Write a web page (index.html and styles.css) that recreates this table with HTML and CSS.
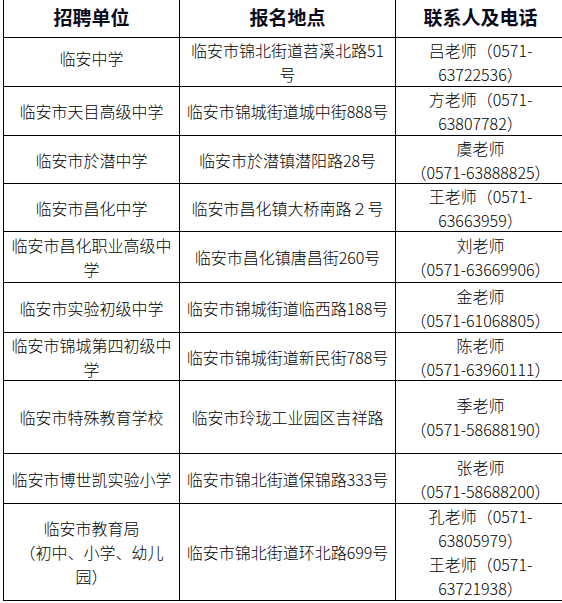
FILE: index.html
```
<!DOCTYPE html>
<html lang="zh-CN">
<head>
<meta charset="utf-8">
<title>招聘单位</title>
<link rel="stylesheet" href="styles.css">
</head>
<body>
<div class="table">
  <div class="cell head">招聘单位</div>
  <div class="cell head">报名地点</div>
  <div class="cell head">联系人及电话</div>

  <div class="cell raise">临安中学</div>
  <div class="cell">临安市锦北街道苕溪北路51<br>号</div>
  <div class="cell">吕老师（0571-<br>63722536）</div>

  <div class="cell">临安市天目高级中学</div>
  <div class="cell">临安市锦城街道城中街888号</div>
  <div class="cell">方老师（0571-<br>63807782）</div>

  <div class="cell">临安市於潜中学</div>
  <div class="cell">临安市於潜镇潜阳路28号</div>
  <div class="cell">虞老师<br>（0571-63888825）</div>

  <div class="cell">临安市昌化中学</div>
  <div class="cell">临安市昌化镇大桥南路２号</div>
  <div class="cell">王老师（0571-<br>63663959）</div>

  <div class="cell">临安市昌化职业高级中<br>学</div>
  <div class="cell">临安市昌化镇唐昌街260号</div>
  <div class="cell">刘老师<br>（0571-63669906）</div>

  <div class="cell">临安市实验初级中学</div>
  <div class="cell">临安市锦城街道临西路188号</div>
  <div class="cell">金老师<br>（0571-61068805）</div>

  <div class="cell">临安市锦城第四初级中<br>学</div>
  <div class="cell">临安市锦城街道新民街788号</div>
  <div class="cell">陈老师<br>（0571-63960111）</div>

  <div class="cell">临安市特殊教育学校</div>
  <div class="cell">临安市玲珑工业园区吉祥路</div>
  <div class="cell">季老师<br>（0571-58688190）</div>

  <div class="cell">临安市博世凯实验小学</div>
  <div class="cell">临安市锦北街道保锦路333号</div>
  <div class="cell">张老师<br>（0571-58688200）</div>

  <div class="cell">临安市教育局<br>（初中、小学、幼儿<br>园）</div>
  <div class="cell">临安市锦北街道环北路699号</div>
  <div class="cell">孔老师（0571-<br>63805979）<br>王老师（0571-<br>63721938）</div>
</div>
</body>
</html>
```
FILE: styles.css
```
html, body {
  margin: 0;
  padding: 0;
  background: #fff;
  overflow: hidden;
}

.table {
  display: grid;
  grid-template-columns: 175px 215px 169px;
  grid-template-rows: 38px 48px 48px 47px 47px 50px 49px 47px 72px 49px 96px;
  gap: 1px;
  padding: 1px;
  background: #000;
  width: max-content;
  margin: -2px 0 0 3px;
  font-family: "Noto Sans CJK SC", "Noto Sans", sans-serif;
  font-size: 16px;
  font-weight: 300;
  line-height: 24px;
  color: #000;
}

.cell {
  background: #fff;
  display: flex;
  flex-direction: column;
  justify-content: center;
  align-items: center;
  text-align: center;
  white-space: nowrap;
  padding: 0 2px;
}

.head {
  font-size: 19px;
  font-weight: 700;
  color: #0a0a1a;
  padding-bottom: 2px;
}

.raise {
  padding-bottom: 8px;
}
```
